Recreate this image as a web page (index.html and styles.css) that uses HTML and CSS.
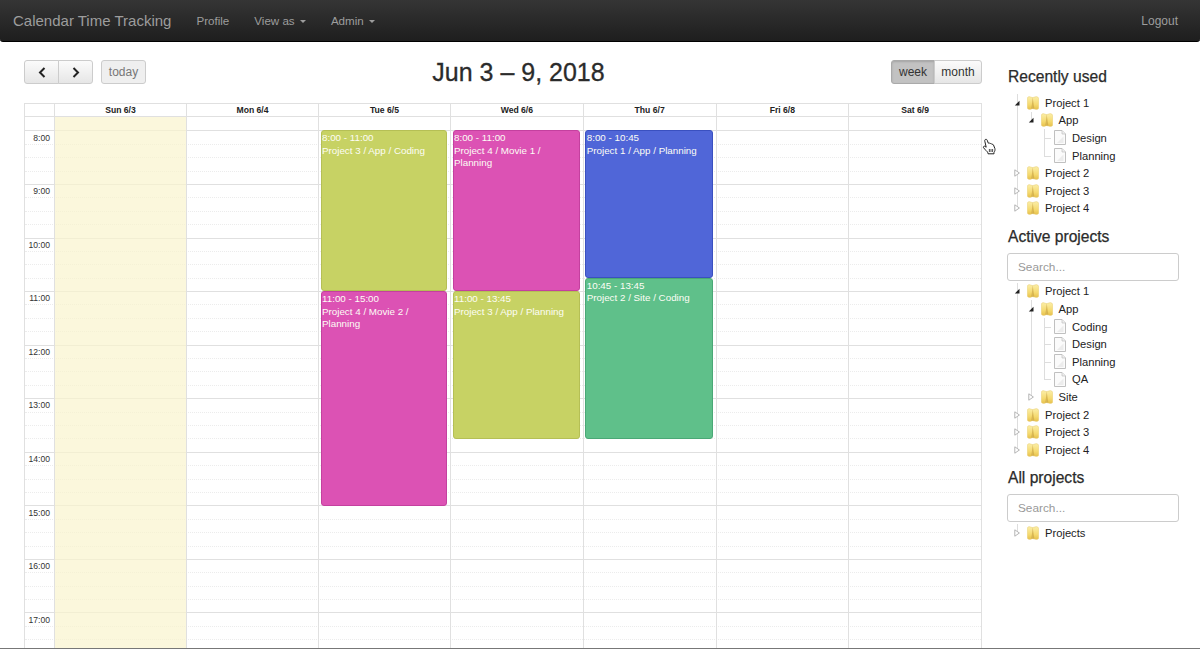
FILE: index.html
```html
<!DOCTYPE html>
<html lang="en">

<head>
    <meta charset="UTF-8">
    <meta name="viewport" content="width=device-width, initial-scale=1.0">
    <title>Calendar Time Tracking</title>
    <link rel="stylesheet" href="styles.css">
</head>

<body>
    <svg class="defs" width="0" height="0">
        <defs>
            <linearGradient id="folder-fill" x1="0" y1="0" x2="0" y2="1">
                <stop offset="0" stop-color="#fbeea8" />
                <stop offset="0.6" stop-color="#f5da70" />
                <stop offset="1" stop-color="#e6c04c" />
            </linearGradient>
            <symbol id="folder" viewBox="0 0 12 14">
                <path d="M.3 2.4Q.3 1 2 .6L5.6 1.6V12.6L3 13.6Q.3 13.4.3 12Z" fill="url(#folder-fill)" stroke="#e8cf78" stroke-width=".5" />
                <path d="M5.6 1.6 9.4.6Q11.7 1 11.7 2.6V12Q11.7 13.4 9.4 13.6L5.6 12.6Z" fill="url(#folder-fill)" stroke="#e8cf78" stroke-width=".5" />
                <path d="M5.8 2.6 7.4 12.8H4.2Z" fill="#c9a33c" opacity=".6" />
            </symbol>
            <symbol id="file" viewBox="0 0 12 15">
                <path d="M.5.5H8L11.5 4V14.5H.5Z" fill="#fbfbfb" stroke="#c0c0c0" />
                <path d="M8 .5V4H11.5" fill="#eee" stroke="#c0c0c0" stroke-width=".7" />
                <path d="M3 13 9.5 6.5V13Z" fill="#ececec" />
            </symbol>
            <symbol id="arrow-open" viewBox="0 0 6 6">
                <path d="M5.5.8V5.5H.8Z" fill="#222" />
            </symbol>
            <symbol id="arrow-closed" viewBox="0 0 6 8">
                <path d="M.8.8 5.4 4 .8 7.2Z" fill="#fff" stroke="#b4b4b4" />
            </symbol>
        </defs>
    </svg>

    <nav class="navbar">
        <a class="brand">Calendar Time Tracking</a>
        <a class="nav-link">Profile</a>
        <a class="nav-link">View as <span class="caret"></span></a>
        <a class="nav-link">Admin <span class="caret"></span></a>
        <a class="nav-link logout">Logout</a>
    </nav>

    <main class="page">
        <section class="calendar">
            <div class="toolbar">
                <div class="toolbar-left">
                    <div class="btn-group">
                        <button class="btn btn-icon">
                            <svg width="8" height="11" viewBox="0 0 8 11"><path d="M6.5 1 2 5.5 6.5 10" fill="none" stroke="#222" stroke-width="2" /></svg>
                        </button>
                        <button class="btn btn-icon">
                            <svg width="8" height="11" viewBox="0 0 8 11"><path d="M1.5 1 6 5.5 1.5 10" fill="none" stroke="#222" stroke-width="2" /></svg>
                        </button>
                    </div>
                    <button class="btn btn-today">today</button>
                </div>
                <h2 class="cal-title">Jun 3 – 9, 2018</h2>
                <div class="btn-group toolbar-right">
                    <button class="btn btn-view active">week</button>
                    <button class="btn btn-view">month</button>
                </div>
            </div>

            <div class="cal-head">
                <div></div>
                <div>Sun 6/3</div>
                <div>Mon 6/4</div>
                <div>Tue 6/5</div>
                <div>Wed 6/6</div>
                <div>Thu 6/7</div>
                <div>Fri 6/8</div>
                <div>Sat 6/9</div>
            </div>

            <div class="cal-body">
                <div class="slots">
                    <div class="slot"></div>
                    <div class="slot major"><span>8:00</span></div><div class="slot"></div><div class="slot"></div><div class="slot"></div>
                    <div class="slot major"><span>9:00</span></div><div class="slot"></div><div class="slot"></div><div class="slot"></div>
                    <div class="slot major"><span>10:00</span></div><div class="slot"></div><div class="slot"></div><div class="slot"></div>
                    <div class="slot major"><span>11:00</span></div><div class="slot"></div><div class="slot"></div><div class="slot"></div>
                    <div class="slot major"><span>12:00</span></div><div class="slot"></div><div class="slot"></div><div class="slot"></div>
                    <div class="slot major"><span>13:00</span></div><div class="slot"></div><div class="slot"></div><div class="slot"></div>
                    <div class="slot major"><span>14:00</span></div><div class="slot"></div><div class="slot"></div><div class="slot"></div>
                    <div class="slot major"><span>15:00</span></div><div class="slot"></div><div class="slot"></div><div class="slot"></div>
                    <div class="slot major"><span>16:00</span></div><div class="slot"></div><div class="slot"></div><div class="slot"></div>
                    <div class="slot major"><span>17:00</span></div><div class="slot"></div><div class="slot"></div><div class="slot"></div>
                </div>
                <div class="columns">
                    <div></div>
                    <div class="day today"></div>
                    <div class="day"></div>
                    <div class="day">
                        <div class="event lime" style="top: 13.4px; height: 160.8px">
                            <div>8:00 - 11:00</div>
                            <div>Project 3 / App / Coding</div>
                        </div>
                        <div class="event magenta" style="top: 174.2px; height: 214.4px">
                            <div>11:00 - 15:00</div>
                            <div>Project 4 / Movie 2 / Planning</div>
                        </div>
                    </div>
                    <div class="day">
                        <div class="event magenta" style="top: 13.4px; height: 160.8px">
                            <div>8:00 - 11:00</div>
                            <div>Project 4 / Movie 1 / Planning</div>
                        </div>
                        <div class="event lime" style="top: 174.2px; height: 147.4px">
                            <div>11:00 - 13:45</div>
                            <div>Project 3 / App / Planning</div>
                        </div>
                    </div>
                    <div class="day">
                        <div class="event blue" style="top: 13.4px; height: 147.4px">
                            <div>8:00 - 10:45</div>
                            <div>Project 1 / App / Planning</div>
                        </div>
                        <div class="event green" style="top: 160.8px; height: 160.8px">
                            <div>10:45 - 13:45</div>
                            <div>Project 2 / Site / Coding</div>
                        </div>
                    </div>
                    <div class="day"></div>
                    <div class="day"></div>
                </div>
            </div>
        </section>

        <aside class="sidebar">
            <h3 class="side-title">Recently used</h3>
            <ul class="tree">
                <li>
                    <div class="node"><svg class="arrow"><use href="#arrow-open" /></svg><svg class="folder"><use href="#folder" /></svg>Project 1</div>
                    <ul>
                        <li>
                            <div class="node"><svg class="arrow"><use href="#arrow-open" /></svg><svg class="folder"><use href="#folder" /></svg>App</div>
                            <ul>
                                <li class="leaf"><div class="node"><span class="no-arrow"></span><svg class="file"><use href="#file" /></svg>Design</div></li>
                                <li class="leaf"><div class="node"><span class="no-arrow"></span><svg class="file"><use href="#file" /></svg>Planning</div></li>
                            </ul>
                        </li>
                    </ul>
                </li>
                <li><div class="node"><svg class="arrow closed"><use href="#arrow-closed" /></svg><svg class="folder"><use href="#folder" /></svg>Project 2</div></li>
                <li><div class="node"><svg class="arrow closed"><use href="#arrow-closed" /></svg><svg class="folder"><use href="#folder" /></svg>Project 3</div></li>
                <li><div class="node"><svg class="arrow closed"><use href="#arrow-closed" /></svg><svg class="folder"><use href="#folder" /></svg>Project 4</div></li>
            </ul>

            <h3 class="side-title">Active projects</h3>
            <input class="search" type="text" placeholder="Search...">
            <ul class="tree">
                <li>
                    <div class="node"><svg class="arrow"><use href="#arrow-open" /></svg><svg class="folder"><use href="#folder" /></svg>Project 1</div>
                    <ul>
                        <li>
                            <div class="node"><svg class="arrow"><use href="#arrow-open" /></svg><svg class="folder"><use href="#folder" /></svg>App</div>
                            <ul>
                                <li class="leaf"><div class="node"><span class="no-arrow"></span><svg class="file"><use href="#file" /></svg>Coding</div></li>
                                <li class="leaf"><div class="node"><span class="no-arrow"></span><svg class="file"><use href="#file" /></svg>Design</div></li>
                                <li class="leaf"><div class="node"><span class="no-arrow"></span><svg class="file"><use href="#file" /></svg>Planning</div></li>
                                <li class="leaf"><div class="node"><span class="no-arrow"></span><svg class="file"><use href="#file" /></svg>QA</div></li>
                            </ul>
                        </li>
                        <li><div class="node"><svg class="arrow closed"><use href="#arrow-closed" /></svg><svg class="folder"><use href="#folder" /></svg>Site</div></li>
                    </ul>
                </li>
                <li><div class="node"><svg class="arrow closed"><use href="#arrow-closed" /></svg><svg class="folder"><use href="#folder" /></svg>Project 2</div></li>
                <li><div class="node"><svg class="arrow closed"><use href="#arrow-closed" /></svg><svg class="folder"><use href="#folder" /></svg>Project 3</div></li>
                <li><div class="node"><svg class="arrow closed"><use href="#arrow-closed" /></svg><svg class="folder"><use href="#folder" /></svg>Project 4</div></li>
            </ul>

            <h3 class="side-title">All projects</h3>
            <input class="search" type="text" placeholder="Search...">
            <ul class="tree">
                <li><div class="node"><svg class="arrow closed"><use href="#arrow-closed" /></svg><svg class="folder"><use href="#folder" /></svg>Projects</div></li>
            </ul>
        </aside>
    </main>

    <!-- mouse pointer caught in the capture -->
    <svg class="pointer" width="14" height="17" viewBox="0 0 14 17">
        <path d="M3.2 1.6C4 1 4.9 1.4 5.2 2.2L6.3 5.2C7 4.8 7.8 5 8.1 5.6 8.8 5.3 9.5 5.6 9.8 6.2 10.5 6 11.2 6.4 11.5 7L12.9 10.6C13.2 12 12.8 13.4 12 14.4V15.8H6V14.6C4.8 13.6 3.2 11.6 1.6 9.8 1 9 1.7 8 2.6 8.2L4.2 9.2 2.8 3.2C2.6 2.6 2.8 2 3.2 1.6Z" fill="#fff" stroke="#222" stroke-width="1" stroke-linejoin="round" />
        <path d="M7.4 11V14M9 11V14M10.6 11V14" stroke="#222" stroke-width=".8" fill="none" />
    </svg>
</body>

</html>
```

FILE: styles.css
```css
* {
    box-sizing: border-box;
}

html,
body {
    height: 100%;
}

body {
    position: relative;
    display: flex;
    flex-direction: column;
    margin: 0;
    overflow: hidden;
    border-bottom: 1px solid #777;
    background-color: #fff;
    color: #333;
    font-family: "Liberation Sans", Arial, sans-serif;
    font-size: 11.2px;
}

.defs {
    position: absolute;
}

/* navbar */
.navbar {
    display: flex;
    flex: none;
    align-items: center;
    gap: 25px;
    height: 42px;
    padding: 0 22px 0 13px;
    border-bottom: 1px solid #000;
    border-radius: 0 0 3px 3px;
    background: linear-gradient(to bottom, #353535, #1e1e1e);
    color: #9d9d9d;
}

.brand {
    font-size: 15px;
}

.nav-link {
    font-size: 11.6px;
}

.logout {
    margin-left: auto;
    font-size: 12px;
}

.caret {
    display: inline-block;
    margin-left: 2px;
    vertical-align: middle;
    border-top: 3px solid #9d9d9d;
    border-right: 3px solid transparent;
    border-left: 3px solid transparent;
}

/* page */
.page {
    display: flex;
    flex: 1;
    gap: 25px;
    min-height: 0;
    padding: 18px 21px 0 24px;
}

.calendar {
    display: flex;
    flex-direction: column;
    width: 958px;
    min-height: 0;
}

.toolbar {
    display: flex;
    flex: none;
    align-items: center;
    justify-content: space-between;
    height: 24px;
    margin-bottom: 19px;
}

.toolbar-left {
    display: flex;
    gap: 8px;
    width: 231px;
}

.toolbar-right {
    justify-content: flex-end;
    width: 200px;
}

.cal-title {
    margin: 0;
    color: #2b2b2b;
    font-size: 25px;
    font-weight: normal;
    -webkit-text-stroke: 0.3px #2b2b2b;
}

.btn-group {
    display: flex;
}

.btn {
    height: 24px;
    padding: 0;
    border: 1px solid #ccc;
    background: linear-gradient(to bottom, #fbfbfb, #e6e6e6);
    color: #333;
    font-family: inherit;
    font-size: 12px;
}

.btn-group .btn:first-child {
    border-radius: 3px 0 0 3px;
}

.btn-group .btn:last-child {
    margin-left: -1px;
    border-radius: 0 3px 3px 0;
}

.btn-icon {
    display: flex;
    align-items: center;
    justify-content: center;
    width: 35px;
}

.btn-today {
    width: 45px;
    border-radius: 3px;
    background: #efefef;
    color: #777;
}

.btn-view {
    width: 44px;
}

.btn-view:last-child {
    width: 48px;
}

.btn-view.active {
    border-color: #aaa;
    background: #c2c2c2;
    box-shadow: inset 0 1px 2px rgba(0, 0, 0, 0.15);
}

/* week grid */
.cal-head,
.columns {
    display: grid;
    grid-template-columns: 29px 132px 132px 132px repeat(4, 1fr);
}

.cal-head {
    flex: none;
    height: 14px;
    border: 1px solid #e0e0e0;
    color: #222;
    font-size: 8.6px;
    font-weight: bold;
    line-height: 12px;
    text-align: center;
}

.cal-head > div + div {
    border-left: 1px solid #e0e0e0;
}

.cal-body {
    position: relative;
    flex: 1;
    min-height: 0;
    overflow: hidden;
    border-right: 1px solid #e0e0e0;
    border-left: 1px solid #e0e0e0;
}

.slot {
    display: flex;
    align-items: center;
    width: 100%;
    height: 13.4px;
    border-top: 1px dotted #ececec;
}

.slot:first-child {
    border-top: 0;
}

.slot.major {
    border-top: 1px solid #e0e0e0;
}

.slot span {
    width: 25px;
    color: #333;
    font-size: 8.6px;
    text-align: right;
}

.columns {
    position: absolute;
    top: 0;
    right: 0;
    bottom: 0;
    left: 0;
}

.day {
    position: relative;
    border-left: 1px solid #e0e0e0;
}

.today {
    background-color: rgba(250, 243, 205, 0.7);
}

.event {
    position: absolute;
    right: 3px;
    left: 1.5px;
    padding: 1px 0.5px;
    overflow: hidden;
    border: 1px solid;
    border-radius: 3px;
    color: #fdfdf5;
    font-size: 9.8px;
    line-height: 12.4px;
}

.lime {
    border-color: #b5bf55;
    background-color: #c7d264;
}

.magenta {
    border-color: #c4409f;
    background-color: #dc52b4;
}

.blue {
    border-color: #3a50c0;
    background-color: #5066d8;
}

.green {
    border-color: #4aa876;
    background-color: #5fc08a;
}

/* sidebar */
.sidebar {
    flex: 1;
    min-width: 0;
    padding-top: 8px;
}

.side-title {
    margin: 0 0 8px;
    padding-left: 1px;
    color: #2b2b2b;
    font-size: 15.6px;
    font-weight: normal;
    line-height: 18px;
    -webkit-text-stroke: 0.25px #2b2b2b;
}

.search {
    display: block;
    width: 100%;
    height: 28px;
    margin-top: -1px;
    margin-bottom: 2px;
    padding: 0 10px;
    border: 1px solid #ccc;
    border-radius: 3px;
    font-family: inherit;
    font-size: 11.8px;
}

.search::placeholder {
    color: #999;
}

.tree,
.tree ul {
    margin: 0;
    padding: 0;
    list-style: none;
}

.tree {
    margin-bottom: 10.5px;
    padding-left: 3px;
}

.tree ul {
    padding-left: 13.5px;
}

.tree li {
    position: relative;
}

.tree li::before {
    position: absolute;
    top: 0;
    bottom: 0;
    left: 7px;
    width: 1px;
    background-color: #ddd;
    content: "";
}

.tree li:last-child::before {
    bottom: auto;
    height: 8.8px;
}

.tree li.leaf::after {
    position: absolute;
    top: 8.8px;
    left: 7px;
    width: 7px;
    height: 1px;
    background-color: #ddd;
    content: "";
}

.node {
    position: relative;
    z-index: 1;
    display: flex;
    align-items: center;
    height: 17.6px;
    color: #222;
}

.arrow {
    width: 6px;
    height: 6px;
    margin: 0 4px;
}

.arrow.closed {
    height: 8px;
}

.no-arrow {
    width: 14px;
}

.folder {
    width: 12px;
    height: 14px;
    margin: 0 6px 0 3px;
}

.file {
    width: 12px;
    height: 15px;
    margin: 0 6px 0 3px;
}

.pointer {
    position: absolute;
    top: 138px;
    left: 982px;
}
```
